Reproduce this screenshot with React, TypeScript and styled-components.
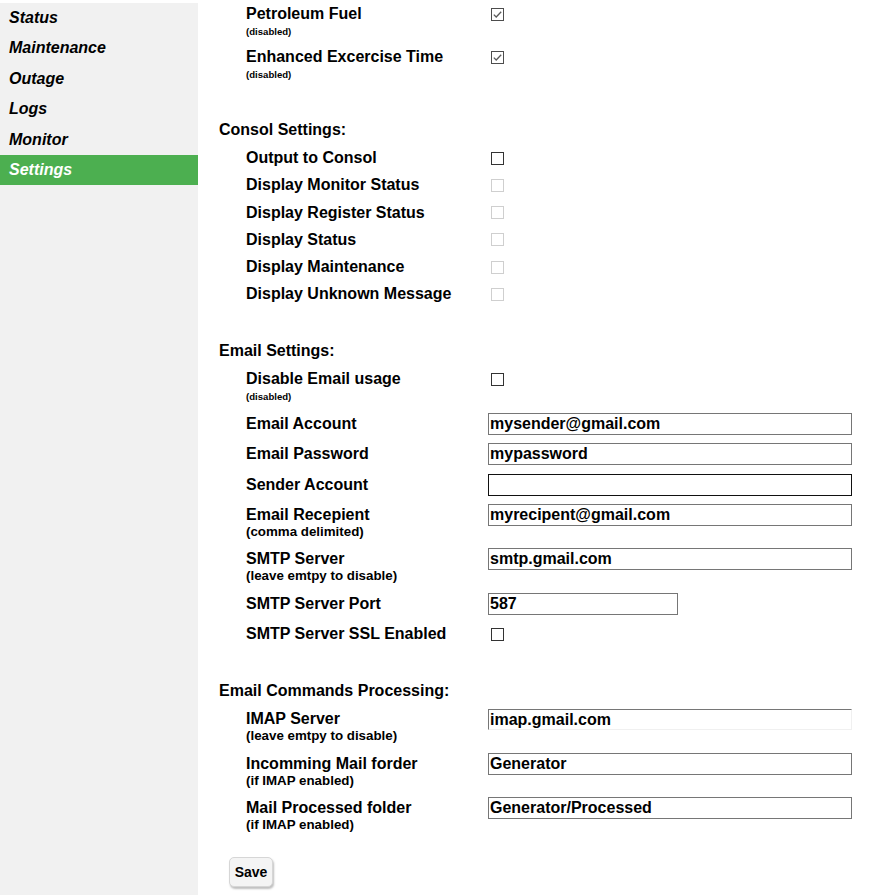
import React from 'react';
import styled, { createGlobalStyle } from 'styled-components';

const GlobalStyle = createGlobalStyle`
  body {
    margin: 0;
    background: #fff;
    font-family: "Liberation Sans", Arial, sans-serif;
    color: #000;
  }
`;

const Page = styled.div`
  display: flex;
  min-height: 100vh;
`;

const Sidebar = styled.nav`
  width: 198px;
  flex-shrink: 0;
  margin-top: 3px;
  background: #f1f1f1;
`;

const NavItem = styled.div<{ $active?: boolean }>`
  height: 30.4px;
  line-height: 30.4px;
  padding-left: 9px;
  font-size: 16px;
  font-weight: bold;
  font-style: italic;
  color: ${({ $active }) => ($active ? '#fff' : '#000')};
  background: ${({ $active }) => ($active ? '#4caf50' : 'transparent')};
`;

const Main = styled.main`
  flex: 1;
  padding: 3px 0 0 21px;
`;

const Section = styled.section<{ $space?: number }>`
  margin-top: ${({ $space }) => $space ?? 0}px;
`;

const SectionTitle = styled.div<{ $after?: number }>`
  font-size: 16px;
  font-weight: bold;
  line-height: 22px;
  margin-bottom: ${({ $after }) => $after ?? 6}px;
`;

const Rows = styled.div<{ $gap: number }>`
  display: flex;
  flex-direction: column;
  gap: ${({ $gap }) => $gap}px;
  padding-left: 27px;
`;

const Row = styled.div`
  display: flex;
  align-items: flex-start;
`;

const LabelCol = styled.div`
  width: 242px;
  flex-shrink: 0;
`;

const Label = styled.div`
  font-size: 16px;
  font-weight: bold;
  line-height: 22px;
`;

const Sub = styled.div<{ $tiny?: boolean }>`
  font-weight: bold;
  font-size: ${({ $tiny }) => ($tiny ? '9.6px' : '13.33px')};
  line-height: ${({ $tiny }) => ($tiny ? '14px' : '16px')};
  margin-top: ${({ $tiny }) => ($tiny ? '0' : '-2px')};
`;

const BoxCell = styled.div`
  height: 22px;
  display: flex;
  align-items: center;
  padding-left: 3px;
`;

const Box = styled.span<{ $tone: 'on' | 'off' | 'checked' }>`
  width: 13px;
  height: 13px;
  box-sizing: border-box;
  display: inline-flex;
  border: 1px solid
    ${({ $tone }) => ($tone === 'on' ? '#333' : $tone === 'checked' ? '#4d4d4d' : '#cfcfcf')};
  background: #fff;
`;

const TextField = styled.input<{ $w?: number; $focus?: boolean; $inset?: boolean }>`
  box-sizing: border-box;
  width: ${({ $w }) => $w ?? 364}px;
  height: ${({ $inset }) => ($inset ? 21 : 22)}px;
  margin: ${({ $inset }) => ($inset ? '1px 0 0' : '0')};
  padding: 0 1px;
  font-family: "Liberation Sans", Arial, sans-serif;
  font-size: 16px;
  font-weight: bold;
  color: #000;
  background: #fff;
  outline: none;
  border: 1px solid ${({ $focus }) => ($focus ? '#111' : '#767676')};
  ${({ $inset }) =>
    $inset &&
    `border-right-color: #f0f0f0; border-bottom-color: #f0f0f0;`}
`;

const SaveButton = styled.button`
  margin: 24px 0 0 10px;
  width: 44px;
  height: 30px;
  padding: 0;
  font-family: "Liberation Sans", Arial, sans-serif;
  font-size: 14px;
  font-weight: bold;
  color: #000;
  background: #f4f4f4;
  border: 1px solid #d6d6d6;
  border-radius: 5px;
  box-shadow: 1px 2px 2px rgba(0, 0, 0, 0.25);
`;

type Tone = 'on' | 'off' | 'checked';

const Check = ({ tone }: { tone: Tone }) => (
  <BoxCell>
    <Box $tone={tone}>
      {tone === 'checked' && (
        <svg width="11" height="11" viewBox="0 0 11 11">
          <path d="M1.8 5.6 L4.2 8 L9.2 2.8" fill="none" stroke="#5a5a5a" strokeWidth="1.3" />
        </svg>
      )}
    </Box>
  </BoxCell>
);

const Field = ({
  label,
  sub,
  tiny,
  children,
}: {
  label: string;
  sub?: string;
  tiny?: boolean;
  children: React.ReactNode;
}) => (
  <Row>
    <LabelCol>
      <Label>{label}</Label>
      {sub && <Sub $tiny={tiny}>{sub}</Sub>}
    </LabelCol>
    {children}
  </Row>
);

const nav = ['Status', 'Maintenance', 'Outage', 'Logs', 'Monitor', 'Settings'];

const consol: [string, Tone][] = [
  ['Output to Consol', 'on'],
  ['Display Monitor Status', 'off'],
  ['Display Register Status', 'off'],
  ['Display Status', 'off'],
  ['Display Maintenance', 'off'],
  ['Display Unknown Message', 'off'],
];

export default function App() {
  return (
    <Page>
      <GlobalStyle />
      <Sidebar>
        {nav.map((n) => (
          <NavItem key={n} $active={n === 'Settings'}>
            {n}
          </NavItem>
        ))}
      </Sidebar>
      <Main>
        <Section>
          <Rows $gap={7}>
            <Field label="Petroleum Fuel" sub="(disabled)" tiny>
              <Check tone="checked" />
            </Field>
            <Field label="Enhanced Excercise Time" sub="(disabled)" tiny>
              <Check tone="checked" />
            </Field>
          </Rows>
        </Section>

        <Section $space={37}>
          <SectionTitle>Consol Settings:</SectionTitle>
          <Rows $gap={5.3}>
            {consol.map(([l, t]) => (
              <Field key={l} label={l}>
                <Check tone={t} />
              </Field>
            ))}
          </Rows>
        </Section>

        <Section $space={35}>
          <SectionTitle>Email Settings:</SectionTitle>
          <Rows $gap={8.4}>
            <Field label="Disable Email usage" sub="(disabled)" tiny>
              <Check tone="on" />
            </Field>
            <Field label="Email Account">
              <TextField defaultValue="mysender@gmail.com" />
            </Field>
            <Field label="Email Password">
              <TextField defaultValue="mypassword" />
            </Field>
            <Field label="Sender Account">
              <TextField defaultValue="" $focus />
            </Field>
            <Field label="Email Recepient" sub="(comma delimited)">
              <TextField defaultValue="myrecipent@gmail.com" />
            </Field>
            <Field label="SMTP Server" sub="(leave emtpy to disable)">
              <TextField defaultValue="smtp.gmail.com" />
            </Field>
            <Field label="SMTP Server Port">
              <TextField defaultValue="587" $w={190} />
            </Field>
            <Field label="SMTP Server SSL Enabled">
              <Check tone="on" />
            </Field>
          </Rows>
        </Section>

        <Section $space={35}>
          <SectionTitle>Email Commands Processing:</SectionTitle>
          <Rows $gap={8.4}>
            <Field label="IMAP Server" sub="(leave emtpy to disable)">
              <TextField defaultValue="imap.gmail.com" $inset />
            </Field>
            <Field label="Incomming Mail forder" sub="(if IMAP enabled)">
              <TextField defaultValue="Generator" />
            </Field>
            <Field label="Mail Processed folder" sub="(if IMAP enabled)">
              <TextField defaultValue="Generator/Processed" />
            </Field>
          </Rows>
        </Section>

        <SaveButton>Save</SaveButton>
      </Main>
    </Page>
  );
}
